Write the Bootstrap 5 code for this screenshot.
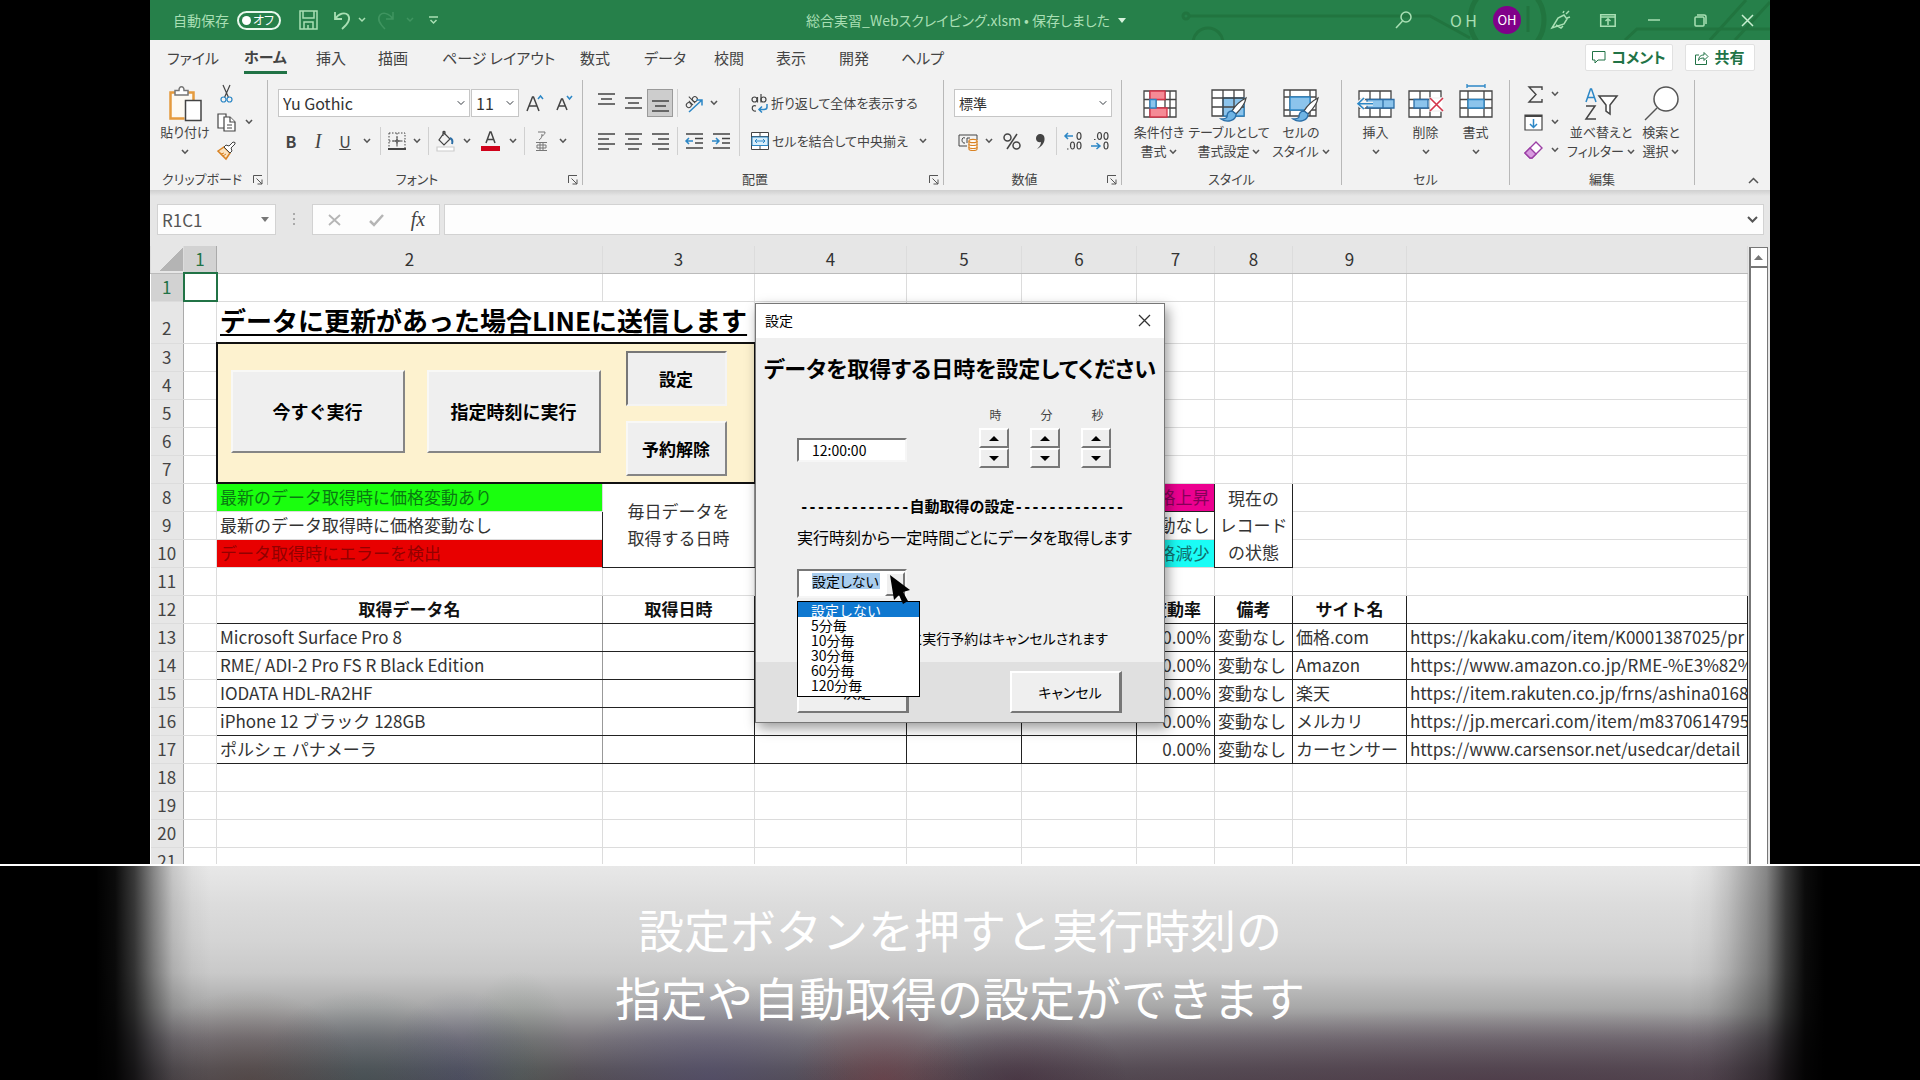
<!DOCTYPE html>
<html lang="ja">
<head>
<meta charset="utf-8">
<meta name="viewport" content="width=device-width, initial-scale=1">
<title>総合実習_Webスクレイピング.xlsm</title>
<link href="https://cdn.jsdelivr.net/npm/bootstrap@5.3.0/dist/css/bootstrap.min.css" rel="stylesheet">
<style>
:root{--jp:"Noto Sans CJK JP","Noto Sans",sans-serif;--green:#26804a;--pale:#a9dfb4;--ink:#444}
body{background:#000;font-family:var(--jp);color:var(--ink);font-size:14px}
button{font-family:inherit;color:inherit;font-feature-settings:inherit}
svg{display:block;flex:none;overflow:visible}
.app{width:84.375%;height:80vh;background:#e6e6e6}
.app>*{flex-shrink:0}
.ui{font-feature-settings:"palt"}
.flat{border:0;background:none;padding:0;display:flex;align-items:center;justify-content:center;height:28px}
/* title bar */
.titlebar{height:40px;background:var(--green);color:var(--pale);padding:0 11px 0 23px}
.titlebar .side{flex:1 1 0}
.circuit{position:absolute;top:0;right:0;z-index:0;overflow:hidden}
.toggle{width:44px;height:19px;border:2px solid #e8f8ec;border-radius:10px;color:#fff;font-size:12px;line-height:14px;padding:0 5px 0 3px;white-space:nowrap}
.toggle i{width:9px;height:9px;border-radius:50%;background:#fff;flex:none}
.avatar{width:28px;height:28px;border-radius:50%;background:#80008a;color:#fff;font-size:13px}
.shut{margin-left:12px}
.w14{width:14px}.w18{width:18px}.w24{width:24px}.w26{width:26px}.w28{width:28px}.w32{width:32px}.w46{width:46px}
.ital{font:italic 20px "Liberation Serif",serif}
/* tabs */
.tabs{height:40px;background:#f2f2f2;padding:4px 15px 0 0}
.tabs nav{display:grid;grid-template-columns:77px 72px 62px 64px 138px 64px 70px 62px 63px 62px 70px;margin:-1px 0 0 17px}
.tabs nav a{color:#444;text-decoration:none;font-size:15px;line-height:30px;white-space:nowrap;justify-self:start}
.tabs nav a.on{font-weight:700;border-bottom:3px solid #217346;line-height:28px;height:31px}
.pill{height:27px;background:#fff;border:1px solid #e1e1e1;border-radius:2px;color:#217346;font-weight:700;font-size:15px;gap:5px}
.pill.c{width:88px}.pill.s{width:70px}
/* ribbon */
.ribbon{height:110px;background:#f2f2f2}
.group{height:105px;border-right:1px solid #b8b8b8;flex:none}
.group .inner{height:88px}
.group .foot{height:18px;line-height:21px;position:relative;font-size:13px}
.group .foot svg{position:absolute;right:4px;top:7px}
.g1{width:118px}.g2{width:315px}.g3{width:361px}.g4{width:178px}.g5{width:220px}.g6{width:168px}.g7{width:185px}
.lines{padding:9px 0 0 10px;display:flex;flex-direction:column;gap:10px}
.rule{width:8px;height:28px;flex:none;background:linear-gradient(#d0d0d0,#d0d0d0) center/1px 100% no-repeat}
.rule.tall{height:68px;margin-top:8px}
.pressed{background:#cdcdcd;border:1px solid #9a9a9a}
.combo{height:28px;border:1px solid #c6c6c6;border-radius:0;background-color:#fff;background-size:8px;background-position:right 4px center;padding:0 4px;font-size:16px;line-height:26px;color:#333}
.combo.n{width:192px}.combo.z{width:48px;margin-left:1px}.combo.f{width:158px;font-size:14px}
.big{border:0;background:none;padding:5px 0 0;line-height:19px;font-size:13px;white-space:nowrap;display:flex;flex-direction:column;align-items:center}
.big .pic{height:37px;display:flex;align-items:center}
.big svg.cv{display:inline-block;vertical-align:1px}
.b50{width:50px}.b54{width:54px}.b66{width:66px}.b70{width:70px}.b74{width:74px}
.word{gap:3px;font-size:13px;white-space:nowrap}
.shade{height:6px;background:linear-gradient(#cfcfcf,#e6e6e6)}
/* formula bar */
.fbar{height:50px;padding:8px 6px 11px 7px}
.fbar>*{background:#fdfdfd;border:1px solid #d2d2d2;height:31px}
.namebox{width:119px;font-size:17px;color:#555}
.namebox input{width:98px;border:0;background:none;color:inherit;padding:0 4px;outline:0;line-height:28px}
.fbar .dots{background:none;border:0;width:36px}
.fxbox{width:128px}
/* sheet */
main{min-height:0;flex-basis:0}
.grid{table-layout:fixed;width:100%;border-collapse:collapse;background:#fff;font-size:17px;color:#333;line-height:24px}
.grid td,.grid th{height:28px;padding:0 3px;border:1px solid #dcdcdc;font-weight:400;white-space:nowrap;overflow:hidden}
.grid tr.heads th{height:27px;background:#e6e6e6;text-align:center;border-top:0;border-bottom-color:#bbb}
.grid tbody th.n,.grid tr.heads th.sel{background:#e6e6e6;text-align:center;border-right-color:#aaa;border-left:0;color:#444;padding:0}
.grid tbody th.n.sel,.grid tr.heads th.sel{background:#d2d2d2;color:#217346}
.grid tr.r2 td,.grid tr.r2 th{height:42px}
.grid tbody tr.r2 th.n{vertical-align:bottom;padding-bottom:3px}
.grid .headline{font-size:26px;line-height:36px;padding-bottom:4px;font-weight:700;color:#000;overflow:visible;text-decoration:underline;text-decoration-thickness:2px;text-underline-offset:3px}
.grid td.panel{background:#fdf2cf;border:2px solid #111;padding:0;vertical-align:top}
.grid td.k,.grid th.k{border-color:#222}
.grid th.k{font-weight:700;text-align:center;color:#111}
.grid td.soft,.grid th.soft{border-right-color:#999}
.grid td.airy{line-height:27px;padding:0 0 2px}
.corner{width:24px;height:23px;margin-left:auto;background:linear-gradient(135deg,transparent 50%,#b4b4b4 50%)}
.grid td.active{outline:2px solid #217346;outline-offset:-1px;background:#fff}
.lime{background:#1aff0e!important;color:#0a7a12}
.rouge{background:#e80000!important;color:#930000}
.pink{background:#ec0090!important;color:#850058}
.aqua{background:#1afdf6!important;color:#12706e}
.runs{padding:2px 0 0 13px;gap:22px}
.opts{padding:7px 0 0 25px;gap:15px}
.face{background:#efefef;color:#000;font-weight:700;border:2px solid;border-color:#f8f8f6 #858585 #858585 #f8f8f6;padding:0}
.face.run{width:174px;height:83px;font-size:18px}
.face.opt{width:101px;height:55px;font-size:17px}
.face.down{border-color:#777 #f4f4f4 #f4f4f4 #777}
.scroll{width:22px;padding:1px 2px 0 1px;background:#e6e6e6}
.scroll>div{background:#fff;border:solid #777;border-width:1px 1px 0 2px}
.scroll button{width:100%;height:20px;border-bottom:2px solid #777}
/* settings window */
.dlg{position:absolute;left:605px;top:303px;width:410px;background:#efefef;border:1px solid #777;box-shadow:3px 5px 12px rgba(0,0,0,.4);color:#000;font-feature-settings:"palt"}
.dlg .cap{height:34px;background:#fff;padding:0 13px 2px 9px}
.dlg h1{font-size:22px;line-height:32px;font-weight:700;text-align:center;margin:13px 0 0;white-space:nowrap}
.timing{padding:23px 53px 0 41px;align-items:flex-end}
.sunk{background:#fff;border:2px solid;border-color:#777 #f6f6f6 #f6f6f6 #777}
.timebox{width:110px;height:24px;font-size:14px;padding:0 13px;margin-bottom:6px;outline:0}
.spin{width:30px;margin-left:21px}
.spin span{font-size:12px;line-height:18px;color:#444;margin-bottom:4px;display:block;text-align:center;padding-left:3px}
.spin button{width:30px;height:20px}
.mini{background:#efefef;border:2px solid;border-color:#fff #777 #777 #fff}
.split{font-size:15px;line-height:24px;font-weight:700;margin-top:26px;padding-left:4px;font-feature-settings:normal}
.split span{font-family:"DejaVu Sans Mono",monospace;font-size:14px}
.note{font-size:16px;line-height:24px;padding-left:41px;margin-top:6px;white-space:nowrap}
.cbx{position:relative;width:110px;height:29px;margin:20px 0 0 41px;padding:2px 0 0 13px}
.cbx input{border:0;width:68px;height:16px;padding:0;background:#a9cdee;font-size:14px;line-height:16px;outline:0;font-feature-settings:inherit;font-family:inherit}
.cbx button{position:absolute;right:0;top:1px;width:20px;height:24px}
.drop{position:absolute;left:41px;top:297px;width:123px;height:96px;border:1px solid #000;border-radius:0;background:#fff;padding:0;overflow:hidden;font-size:14px;font-family:inherit;outline:0;z-index:2;scrollbar-width:none}
.drop option{display:flex;align-items:center;height:15px;min-height:0;line-height:15px;padding:0 0 0 13px;color:#000;font-size:14px;font-family:var(--jp)}
.drop option:checked{background:#0f78d0 linear-gradient(#0f78d0,#0f78d0);color:#fff}
.later{margin-top:28px;padding-left:154px;font-size:14px}
.actions{background:#e0e0e0;height:60px;margin-top:12px;padding:9px 42px 0 41px}
.act{width:112px;height:42px;font-size:14px;border:2px solid;border-color:#fff #777 #777 #fff;border-right-width:3px;padding:0 0 0 9px;color:#000;background:#efefef}
.pointer{position:absolute;left:134px;top:271px;z-index:3}
/* caption strip */
.strip{border-top:2px solid #fff;overflow:hidden;color:#fff;font-size:46px;line-height:68px;text-align:center;padding-top:28px;
background:
linear-gradient(90deg,#000 5%,rgba(0,0,0,.95) 6%,rgba(0,0,0,.75) 7%,rgba(0,0,0,.42) 8%,rgba(0,0,0,.14) 9%,rgba(0,0,0,.04) 10%,transparent 11%,transparent 88%,rgba(0,0,0,.04) 89%,rgba(0,0,0,.14) 90%,rgba(0,0,0,.42) 92%,rgba(0,0,0,.75) 93%,rgba(0,0,0,.95) 94%,#000 95%),
radial-gradient(110px 90px at 13% 100%,rgba(80,62,50,.35),transparent),
radial-gradient(110px 90px at 19% 100%,rgba(50,85,85,.35),transparent),
radial-gradient(80px 90px at 24% 100%,rgba(60,75,120,.3),transparent),
radial-gradient(60px 110px at 27% 100%,rgba(80,115,85,.25),transparent),
radial-gradient(140px 100px at 37% 100%,rgba(80,76,125,.4),transparent),
radial-gradient(90px 80px at 46% 100%,rgba(130,55,65,.4),transparent),
radial-gradient(110px 70px at 53% 100%,rgba(60,30,50,.4),transparent),
radial-gradient(700px 70px at 78% 100%,rgba(75,48,66,.5),transparent),
linear-gradient(#e8e8e8 0,#dcdcdc 18%,#d4d4d4 35%,#c9c9c9 50%,#a8a8a8 66%,#78747a 81%,#59545a 95%,#544e54 100%)}
</style>
<script src="https://cdn.jsdelivr.net/npm/bootstrap@5.3.0/dist/js/bootstrap.bundle.min.js"></script>
</head>
<body class="vh-100 d-flex flex-column overflow-hidden">
<svg width="0" height="0" class="position-absolute"><defs>
<symbol id="cv" viewBox="0 0 8 6"><path d="M1 1l3 3.200L7 1" fill="none" stroke="#555" stroke-width="1.600"/></symbol>
<symbol id="ln" viewBox="0 0 10 10"><path d="M.5 8V.5H9M3.500 3.500L9 9M9 4.500V9H4.500" fill="none" stroke="#555"/></symbol>
</defs></svg>

<div class="app position-relative mx-auto d-flex flex-column overflow-hidden">
 <header class="titlebar ui d-flex align-items-center position-relative">
  <svg class="circuit" width="590" height="40" fill="none" stroke="#21743f" stroke-width="3"><path d="M10 16h240l40 22M445 40l12-11h133"/><circle cx="6" cy="16" r="3"/><circle cx="28" cy="43" r="15"/><circle cx="327" cy="20" r="37" stroke-width="5"/><path d="M530 40L566 0M555 40L590 2M348 6v26"/></svg>
  <div class="side d-flex align-items-center position-relative">
   <span class="me-2">自動保存</span>
   <button class="toggle bg-transparent d-flex align-items-center justify-content-between" aria-label="自動保存 オフ"><i></i>オフ</button>
   <button class="flat w46 ms-1" aria-label="上書き保存"><svg width="19" height="20" fill="none" stroke="var(--pale)" stroke-width="1.500"><path d="M1 1h17v18H1zM4 1v7h11V1M5 19v-7h9v7M9 19v-4"/></svg></button>
   <button class="flat w24" aria-label="元に戻す"><svg width="20" height="20" fill="none" stroke="var(--pale)" stroke-width="1.800"><path d="M2 2v7h7M2 9c4-6 10-7 13-4 3 4 1 8-6 14"/></svg></button>
   <button class="flat w14" aria-label="元に戻す一覧"><svg width="8" height="6" fill="none" stroke="var(--pale)" stroke-width="1.500"><path d="M1 1l3 3 3-3"/></svg></button>
   <button class="flat w32" aria-label="やり直し"><svg width="18" height="20" fill="none" stroke="#3f9460" stroke-width="1.500"><path d="M17 2v7h-7M17 9C13 3 7 2 4 5c-3 4-1 8 5 14"/></svg></button>
   <button class="flat w18" aria-label="やり直し一覧"><svg width="8" height="6" fill="none" stroke="#3f9460" stroke-width="1.500"><path d="M1 1l3 3 3-3"/></svg></button>
   <button class="flat w28" aria-label="カスタマイズ"><svg width="9" height="9" fill="none" stroke="var(--pale)" stroke-width="1.500"><path d="M0 1h9M1.500 4l3 3 3-3"/></svg></button>
  </div>
  <div class="position-relative d-flex align-items-center gap-2"><span>総合実習_Webスクレイピング.xlsm • 保存しました</span><svg width="8" height="5"><path d="M0 0h8L4 5z" fill="#d6f2dc"/></svg></div>
  <div class="side d-flex align-items-center justify-content-end position-relative">
   <button class="flat w28" aria-label="検索"><svg width="17" height="18" fill="none" stroke="var(--pale)" stroke-width="1.500"><circle cx="11" cy="6" r="5"/><path d="M7.500 10L1 17"/></svg></button>
   <span class="fs-6 ms-4 ps-2 me-3">O H</span>
   <span class="avatar d-flex align-items-center justify-content-center">OH</span>
   <button class="flat w32 ms-4 me-2" aria-label="描画"><svg width="20" height="20" fill="none" stroke="var(--pale)" stroke-width="1.500"><path d="M1 18L7 8l6-3 3 4-3 5zM5 15l5 3 2-2M12 3l1-2M15 4l3-3M16 8l3-1"/></svg></button>
   <button class="flat w46" aria-label="リボンの表示"><svg width="16" height="13" fill="none" stroke="var(--pale)" stroke-width="1.500"><path d="M.7.7h14.500v11.500H.7zM.7 3h14.500M8 11V5M5.500 7L8 4.800 10.500 7"/></svg></button>
   <button class="flat w46" aria-label="最小化"><svg width="12" height="2"><path d="M0 1h12" stroke="var(--pale)" stroke-width="1.500"/></svg></button>
   <button class="flat w46" aria-label="元に戻す（縮小）"><svg width="13" height="13" fill="none" stroke="var(--pale)" stroke-width="1.500"><rect x="1" y="3" width="9" height="9" rx="1"/><path d="M3 1h7q2 0 2 2v7"/></svg></button>
   <button class="flat w24 shut" aria-label="閉じる"><svg width="13" height="13"><path d="M1 1l11 11M12 1L1 12" stroke="#c8efd0" stroke-width="1.500"/></svg></button>
  </div>
 </header>

 <div class="tabs ui d-flex align-items-start justify-content-between">
  <nav><a href="#">ファイル</a><a href="#" class="on">ホーム</a><a href="#">挿入</a><a href="#">描画</a><a href="#">ページ レイアウト</a><a href="#">数式</a><a href="#">データ</a><a href="#">校閲</a><a href="#">表示</a><a href="#">開発</a><a href="#">ヘルプ</a></nav>
  <div class="d-flex gap-2">
   <button class="pill c me-1 p-0 d-flex align-items-center justify-content-center"><svg width="14" height="13" fill="none" stroke="#217346"><path d="M.5.500h12.500v8.500H6l-3 3V9H.5z"/></svg>コメント</button>
   <button class="pill s p-0 d-flex align-items-center justify-content-center"><svg width="14" height="14" fill="none" stroke="#217346"><path d="M4 4H.5v9.500h11V9M3.500 9.500c.5-4 2-5.500 5.500-5.500V1.500L13 5.500 9 9.500V7c-3 0-4.500.5-5.500 2.500z"/></svg>共有</button>
  </div>
 </div>

 <div class="ribbon ui d-flex">
  <section class="group g1">
   <div class="inner d-flex">
    <button class="big b54 ms-2"><span class="pic"><svg width="33" height="36" fill="none"><path d="M24.500 15V6.500h-23v26h14" stroke="#e59b3e" stroke-width="2.500" fill="#fdfaf3"/><path d="M6 9V4.500h4c0-5 5-5 5 0h4V9z" fill="#fff" stroke="#777" stroke-width="1.500"/><path d="M16.500 14.500h15.500v20H16.500z" fill="#fff" stroke="#444" stroke-width="1.500"/></svg></span><span>貼り付け</span><svg class="cv mt-2" width="8" height="6"><use href="#cv"/></svg></button>
    <div class="d-flex flex-column">
     <button class="flat w28" aria-label="切り取り"><svg width="13" height="18" fill="none" stroke="#444" stroke-width="1.200"><path d="M3 0l5.500 12.500M10 0L4.500 12.500"/><circle cx="3.500" cy="14.500" r="2.500" stroke="#2c87c6"/><circle cx="9.500" cy="14.500" r="2.500" stroke="#2c87c6"/></svg></button>
     <div class="d-flex"><button class="flat w28" aria-label="コピー"><svg width="19" height="19" fill="#fff" stroke="#444" stroke-width="1.200"><path d="M8 15H1V1h8v3"/><path d="M7 4h6l5 5v9H7z"/><path d="M13 4v5h5M10 12h5M10 15h5"/></svg></button><button class="flat w18" aria-label="コピー一覧"><svg width="8" height="6"><use href="#cv"/></svg></button></div>
     <button class="flat w28" aria-label="書式のコピー"><svg width="19" height="18"><path d="M1 10l6-4 6 6-4 6z" fill="#fbe3c0" stroke="#d98324" stroke-width="1.500"/><path d="M4 13l3-1M6 15l3-2" stroke="#d98324"/><path d="M7 6l2-2 3 1 4-4q3 0 2 2l-4 4 1 3-2 2z" fill="#fff" stroke="#444"/></svg></button>
    </div>
   </div>
   <div class="foot ps-2 ms-1">クリップボード<svg width="10" height="10"><use href="#ln"/></svg></div>
  </section>

  <section class="group g2">
   <div class="inner lines">
    <div class="d-flex"><select class="form-select combo n" aria-label="フォント"><option>Yu Gothic</option></select><select class="form-select combo z" aria-label="サイズ"><option>11</option></select>
     <button class="flat w32" aria-label="拡大"><svg width="18" height="18" fill="none" stroke="#444" stroke-width="1.500"><path d="M1 17L6.500 3h1L13 17M3 12h8"/><path d="M12 5l2.500-3L17 5" stroke="#2c87c6"/></svg></button>
     <button class="flat w26" aria-label="縮小"><svg width="17" height="16" fill="none" stroke="#444" stroke-width="1.500"><path d="M1 15L5.500 4h1L11 15M3 11h6"/><path d="M11 1l2.500 3L16 1" stroke="#2c87c6"/></svg></button></div>
    <div class="d-flex">
     <button class="flat w26 fs-6 fw-bold">B</button><button class="flat w28 ital">I</button><button class="flat w26 fs-6 text-decoration-underline">U</button><button class="flat w18" aria-label="下線"><svg width="8" height="6"><use href="#cv"/></svg></button><span class="rule"></span>
     <button class="flat w26" aria-label="罫線"><svg width="18" height="18" fill="none" stroke="#444"><path d="M1 1h16v16M1 1v16M9 1v16M1 9h16" stroke-dasharray="1.500 1.500"/><path d="M0 17h18" stroke-width="2"/><path d="M5 9h8M9 5v8"/></svg></button><button class="flat w14" aria-label="罫線一覧"><svg width="8" height="6"><use href="#cv"/></svg></button><span class="rule"></span>
     <button class="flat w28" aria-label="塗りつぶし"><svg width="18" height="20" fill="none" stroke="#444" stroke-width="1.200"><path d="M7 2l6 6-6 6-5-5zM6 5V1c0-1 2-1 2 0v3"/><path d="M13 7c2 1 3 3 2 6" stroke="#2c6ea6" stroke-width="2"/><path d="M0 16h17v4H0z" fill="#fff" stroke="#ccc"/></svg></button><button class="flat w14" aria-label="塗りつぶし一覧"><svg width="8" height="6"><use href="#cv"/></svg></button>
     <button class="flat w32" aria-label="文字色"><svg width="19" height="20" fill="none"><path d="M5 12L9 1h1l4 11M6.500 8.500h6" stroke="#444" stroke-width="1.500"/><path d="M0 15h19v5H0z" fill="#d0021b"/></svg></button><button class="flat w14" aria-label="文字色一覧"><svg width="8" height="6"><use href="#cv"/></svg></button><span class="rule"></span>
     <button class="flat w26" aria-label="ふりがな"><svg width="11" height="20" fill="none" stroke="#777"><path d="M2 1h7c0 2-1 3-3 4M6 3c0 3-1 5-3 6M0 11.500h11M4 12v7M7 12v7M1 14h9v3H1zM0 19.500h11"/></svg></button><button class="flat w18" aria-label="ふりがな一覧"><svg width="8" height="6"><use href="#cv"/></svg></button>
    </div>
   </div>
   <div class="foot text-center pe-3">フォント<svg width="10" height="10"><use href="#ln"/></svg></div>
  </section>

  <section class="group g3">
   <div class="inner d-flex">
    <div class="lines">
     <div class="d-flex">
      <button class="flat w26 pb-2" aria-label="上揃え"><svg width="17" height="13" stroke="#444" stroke-width="1.500"><path d="M0 1h17M3 6h11M0 11h17"/></svg></button>
      <button class="flat w28" aria-label="中央揃え（上下）"><svg width="17" height="13" stroke="#444" stroke-width="1.500"><path d="M0 1h17M3 6h11M0 11h17"/></svg></button>
      <button class="flat w26 pressed" aria-label="下揃え"><svg width="17" height="17" stroke="#444" stroke-width="1.500"><path d="M0 6h17M3 11h11M0 16h17"/></svg></button><span class="rule"></span>
      <button class="flat w26" aria-label="方向"><svg width="20" height="19" fill="none" stroke="#444"><g transform="rotate(-45 8 8)"><circle cx="3.500" cy="8" r="2.500"/><path d="M6.500 5v6M9.500 2v9"/><circle cx="12" cy="8" r="2.500"/></g><path d="M5 18L18 6M12.500 6H18v5.500" stroke="#2c87c6" stroke-width="1.500"/></svg></button><button class="flat w14" aria-label="方向一覧"><svg width="8" height="6"><use href="#cv"/></svg></button>
     </div>
     <div class="d-flex">
      <button class="flat w26" aria-label="左揃え"><svg width="17" height="17" stroke="#444" stroke-width="1.500"><path d="M0 1h17M0 6h11M0 11h17M0 16h11"/></svg></button>
      <button class="flat w28" aria-label="中央揃え"><svg width="17" height="17" stroke="#444" stroke-width="1.500"><path d="M0 1h17M3 6h11M0 11h17M3 16h11"/></svg></button>
      <button class="flat w26" aria-label="右揃え"><svg width="17" height="17" stroke="#444" stroke-width="1.500"><path d="M0 1h17M6 6h11M0 11h17M6 16h11"/></svg></button><span class="rule"></span>
      <button class="flat w26" aria-label="インデントを減らす"><svg width="18" height="16" fill="none" stroke="#444" stroke-width="1.500"><path d="M1 1h17M10 5.500h8M10 10h8M1 15h17"/><path d="M8 8H1M4 5L1 8l3 3" stroke="#2c87c6"/></svg></button>
      <button class="flat w28" aria-label="インデントを増やす"><svg width="18" height="16" fill="none" stroke="#444" stroke-width="1.500"><path d="M1 1h17M10 5.500h8M10 10h8M1 15h17"/><path d="M0 8h7M4 5l3 3-3 3" stroke="#2c87c6"/></svg></button>
     </div>
    </div>
    <span class="rule tall"></span>
    <div class="lines ps-2">
     <button class="flat word justify-content-start"><svg width="17" height="20" fill="none" stroke="#444" stroke-width="1.200"><circle cx="3.500" cy="6.500" r="2.500"/><path d="M6.500 4v5.500M10 1v8.500"/><circle cx="12.500" cy="6.500" r="2.500"/><path d="M5 13c-5-2-5 6 0 5"/><path d="M16 11v3c0 2-1 2.500-3 2.500H8M11 13.500l-3 3 3 3" stroke="#2c87c6" stroke-width="1.500"/></svg>折り返して全体を表示する</button>
     <button class="flat word justify-content-start"><svg width="18" height="18" fill="#fff" stroke="#444"><path d="M.5.500h17v17H.5zM.5 4.500h17M.5 13.500h17M9 0v4.500M9 13.500V18"/><path d="M1 5h16v8.500H1z" fill="#d9eefa" stroke="#2c87c6"/><path d="M4 9h10M6 7L4 9l2 2M12 7l2 2-2 2" fill="none" stroke="#2c87c6"/></svg>セルを結合して中央揃え<svg class="ms-2" width="8" height="6"><use href="#cv"/></svg></button>
    </div>
   </div>
   <div class="foot text-center pe-3">配置<svg width="10" height="10"><use href="#ln"/></svg></div>
  </section>

  <section class="group g4">
   <div class="inner lines">
    <select class="form-select combo f" aria-label="表示形式"><option>標準</option></select>
    <div class="d-flex">
     <button class="flat w28" aria-label="通貨"><svg width="20" height="19" fill="none" stroke="#444"><path d="M1 14V3h18v5M1 14h8"/><path d="M7 6c-4-2-4 6 0 5M12 6H9v5"/><g stroke="#d98324" fill="#fff" stroke-width="1.200"><path d="M11 9v8c0 2 8 2 8 0V9"/><ellipse cx="15" cy="9" rx="4" ry="1.700"/><path d="M11 12c0 2 8 2 8 0M11 15c0 2 8 2 8 0"/></g></svg></button><button class="flat w14" aria-label="通貨一覧"><svg width="8" height="6"><use href="#cv"/></svg></button>
     <button class="flat w32" aria-label="パーセント"><svg width="18" height="17" fill="none" stroke="#444" stroke-width="1.500"><circle cx="4.500" cy="4.500" r="3.500"/><circle cx="13.500" cy="12.500" r="3.500"/><path d="M14 1L4 16"/></svg></button>
     <button class="flat w24" aria-label="桁区切り"><svg width="9" height="15"><path d="M4 0c3 0 5 2 4.500 6C8 10 5 13 1 15c2-2 4-4 4-7C1 9 0 6 0 4c0-2 2-4 4-4z" fill="#444"/></svg></button><span class="rule"></span>
     <button class="flat w26" aria-label="小数点以下を増やす"><svg width="18" height="18" fill="none" stroke="#444" stroke-width="1.200"><ellipse cx="15" cy="4" rx="2" ry="3.500"/><ellipse cx="8.500" cy="13.500" rx="2" ry="3.500"/><ellipse cx="15" cy="13.500" rx="2" ry="3.500"/><path d="M3 17h1.500"/><path d="M9 4H1M4 1L1 4l3 3" stroke="#2c87c6" stroke-width="1.500"/></svg></button>
     <button class="flat w28" aria-label="小数点以下を減らす"><svg width="18" height="18" fill="none" stroke="#444" stroke-width="1.200"><ellipse cx="8.500" cy="4" rx="2" ry="3.500"/><ellipse cx="15" cy="4" rx="2" ry="3.500"/><ellipse cx="15" cy="13.500" rx="2" ry="3.500"/><path d="M3 7.500h1.500"/><path d="M0 14h8M5.500 11L9 14l-3.500 3" stroke="#2c87c6" stroke-width="1.500"/></svg></button>
    </div>
   </div>
   <div class="foot text-center pe-3">数値<svg width="10" height="10"><use href="#ln"/></svg></div>
  </section>

  <section class="group g5">
   <div class="inner d-flex ps-1">
    <button class="big b66"><span class="pic"><svg width="33" height="28" fill="#fff" stroke="#444" stroke-width="1.300"><path d="M1 1h32v26H1zM7 1v26M13 1v26M22 1v26M27 1v26M1 9.500h32M1 18h32"/><path d="M7 1h15v8.500H7zM7 18h17v9H7z" fill="#f58a95" stroke="#d4354a"/><path d="M7 9.500h6V18H7z" fill="#8cc4ec" stroke="#2c87c6"/></svg></span><span>条件付き</span><span>書式 <svg class="cv" width="8" height="6"><use href="#cv"/></svg></span></button>
    <button class="big b74"><span class="pic"><svg width="36" height="34" fill="#fff" stroke="#444" stroke-width="1.300"><path d="M1 3h32v26H1z"/><path d="M12 11h21v18H12z" fill="#8cc4ec" stroke="#2c87c6"/><path d="M12 3v26M23 3v26M1 11h32M1 20h32" fill="none"/><path d="M35 11c-6 3-11 8-14 13l4 3c5-5 9-10 10-16z"/><path d="M21 24c-4 0-5 3-5 6-1 2-3 2-6 2 6 4 15 2 15-5z" fill="#6fb4e4" stroke="#2c6ea6"/></svg></span><span>テーブルとして</span><span>書式設定 <svg class="cv" width="8" height="6"><use href="#cv"/></svg></span></button>
    <button class="big b70"><span class="pic"><svg width="36" height="34" fill="#fff" stroke="#444" stroke-width="1.300"><path d="M1 3h32v26H1zM7 3v26M27 3v26M1 10h32M1 23h32"/><path d="M7 10h20v13H7z" fill="#8cc4ec" stroke="#2c87c6"/><path d="M35 11c-6 3-11 8-14 13l4 3c5-5 9-10 10-16z"/><path d="M21 24c-4 0-5 3-5 6-1 2-3 2-6 2 6 4 15 2 15-5z" fill="#6fb4e4" stroke="#2c6ea6"/></svg></span><span>セルの</span><span>スタイル <svg class="cv" width="8" height="6"><use href="#cv"/></svg></span></button>
   </div>
   <div class="foot text-center">スタイル</div>
  </section>

  <section class="group g6">
   <div class="inner d-flex justify-content-center">
    <button class="big b50"><span class="pic"><svg width="37" height="28" fill="#fff" stroke="#444" stroke-width="1.300"><path d="M2 1h32v26H2zM13 1v26M23 1v26M2 9.500h32M2 18h32"/><path d="M10 9.500h27V18H10z" fill="#8cc4ec" stroke="#2c6ea6"/><path d="M26 9.500V18" stroke="#2c6ea6"/><path d="M16 13.700H1M7 8l-6 5.700L7 19" fill="none" stroke="#f2f2f2" stroke-width="4"/><path d="M16 13.700H1M7 8l-6 5.700L7 19" fill="none" stroke="#2c87c6" stroke-width="1.600"/></svg></span><span>挿入</span><svg class="cv mt-2" width="8" height="6"><use href="#cv"/></svg></button>
    <button class="big b50"><span class="pic"><svg width="36" height="28" fill="#fff" stroke="#444" stroke-width="1.300"><path d="M1 1h32v26H1zM12 1v26M22 1v26M1 9.500h32M1 18h32"/><path d="M6 9.500h14V18H6z" fill="#8cc4ec" stroke="#2c6ea6"/><path d="M22 8h13v13H22z" stroke="#f2f2f2"/><path d="M22 8l13 13M35 8L22 21" stroke="#d4354a" stroke-width="1.600"/></svg></span><span>削除</span><svg class="cv mt-2" width="8" height="6"><use href="#cv"/></svg></button>
    <button class="big b50"><span class="pic"><svg width="34" height="28" fill="#fff" stroke="#444" stroke-width="1.300"><path d="M1 1h32v26H1zM9 1v26M25 1v26M1 9.500h32M1 18h32"/><path d="M9 9.500h16V18H9z" fill="#8cc4ec" stroke="#2c87c6"/><path d="M8-4h18M8-6v4M26-6v4" stroke="#2c87c6"/></svg></span><span>書式</span><svg class="cv mt-2" width="8" height="6"><use href="#cv"/></svg></button>
   </div>
   <div class="foot text-center">セル</div>
  </section>

  <section class="group g7">
   <div class="inner d-flex">
    <div class="d-flex flex-column ms-2 me-1">
     <button class="flat w46 gap-2 ps-1" aria-label="合計"><svg width="15" height="17" fill="none" stroke="#444" stroke-width="1.400"><path d="M14 4V1H1l7 7.500L1 16h13v-3"/></svg><svg width="8" height="6"><use href="#cv"/></svg></button>
     <button class="flat w46 gap-2" aria-label="フィル"><svg width="19" height="17" fill="#fff" stroke="#444" stroke-width="1.200"><path d="M1 1h17v15H1z"/><path d="M1 2h17" stroke-width="2"/><path d="M9.500 5v8M6 10l3.500 3.500L13 10" fill="none" stroke="#2c87c6" stroke-width="1.500"/></svg><svg width="8" height="6"><use href="#cv"/></svg></button>
     <button class="flat w46 gap-2" aria-label="クリア"><svg width="19" height="18" fill="#fff" stroke="#9b3fa5" stroke-width="1.400"><path d="M12 1l6 6L8 17H6l-5-5z"/><path d="M6 7l6 6-4 4H6l-5-5z" fill="#d89be0"/></svg><svg width="8" height="6"><use href="#cv"/></svg></button>
    </div>
    <button class="big b66"><span class="pic"><svg width="34" height="32" fill="none" stroke="#444" stroke-width="1.500"><path d="M2 14L6.500 1h1L12 14M4 9.500h6" stroke="#2c87c6"/><path d="M2 18h9L2 31h10"/><path d="M15 8h18l-7 9v9l-4-3v-6z" fill="#fff"/></svg></span><span>並べ替えと</span><span>フィルター <svg class="cv" width="8" height="6"><use href="#cv"/></svg></span></button>
    <button class="big b54"><span class="pic"><svg width="35" height="34" fill="#fff" stroke="#555" stroke-width="1.500"><circle cx="22" cy="12" r="12"/><path d="M13 21L1 33"/></svg></span><span>検索と</span><span>選択 <svg class="cv" width="8" height="6"><use href="#cv"/></svg></span></button>
   </div>
   <div class="foot text-center">編集</div>
  </section>
  <div class="flex-grow-1 d-flex align-items-end justify-content-end pe-2"><button class="flat w18" aria-label="リボンを折りたたむ"><svg width="11" height="7" class="mt-2"><path d="M1 6l4.500-4.500L10 6" fill="none" stroke="#555" stroke-width="1.500"/></svg></button></div>
 </div>
 <div class="shade"></div>

 <div class="fbar d-flex">
  <div class="namebox d-flex align-items-center"><input value="R1C1" aria-label="名前ボックス"><button class="flat w18" aria-label="名前一覧"><svg width="8" height="5"><path d="M0 0h8L4 5z" fill="#777"/></svg></button></div>
  <div class="dots d-flex align-items-center justify-content-center"><svg width="3" height="13" fill="#aaa"><path d="M0 0h2v2H0zM0 5h2v2H0zM0 10h2v2H0z"/></svg></div>
  <div class="fxbox d-flex align-items-center justify-content-around">
   <button class="flat w26" aria-label="キャンセル"><svg width="13" height="12"><path d="M1 1l11 10M12 1L1 11" stroke="#b5b5b5" stroke-width="1.800"/></svg></button>
   <button class="flat w26" aria-label="入力"><svg width="15" height="12"><path d="M1 7l4 4L14 1" fill="none" stroke="#b5b5b5" stroke-width="2.500"/></svg></button>
   <button class="flat w26 ital">fx</button></div>
  <div class="flex-grow-1 ms-1 d-flex align-items-center pe-1"><input class="flex-grow-1 border-0 bg-transparent" aria-label="数式バー"><button class="flat w14" aria-label="数式バーの展開"><svg width="11" height="7"><path d="M1 1l4.500 4.500L10 1" fill="none" stroke="#555" stroke-width="2"/></svg></button></div>
 </div>

 <main class="flex-grow-1 d-flex overflow-hidden">
  <div class="flex-grow-1 overflow-hidden">
  <table class="grid">
   <colgroup><col width="33"><col width="33"><col width="386"><col width="152"><col width="152"><col width="115"><col width="115"><col width="78"><col width="78"><col width="114"><col></colgroup>
   <thead><tr class="heads"><th class="p-0"><div class="corner"></div></th><th class="sel">1</th><th>2</th><th>3</th><th>4</th><th>5</th><th>6</th><th>7</th><th>8</th><th>9</th><th></th></tr></thead>
   <tbody>
   <tr><th class="n sel">1</th><td class="active"></td><td></td><td></td><td></td><td></td><td></td><td></td><td></td><td></td><td></td></tr>
   <tr class="r2"><th class="n">2</th><td></td><td colspan="2" class="headline">データに更新があった場合LINEに送信します</td><td></td><td></td><td></td><td></td><td></td><td></td><td></td></tr>
   <tr><th class="n">3</th><td></td><td colspan="2" rowspan="5" class="panel"><div class="d-flex">
     <div class="runs d-flex align-items-center"><button class="face run">今すぐ実行</button><button class="face run">指定時刻に実行</button></div>
     <div class="opts d-flex flex-column"><button class="face opt down">設定</button><button class="face opt">予約解除</button></div></div></td><td></td><td></td><td></td><td></td><td></td><td></td><td></td></tr>
   <tr><th class="n">4</th><td></td><td></td><td></td><td></td><td></td><td></td><td></td><td></td></tr>
   <tr><th class="n">5</th><td></td><td></td><td></td><td></td><td></td><td></td><td></td><td></td></tr>
   <tr><th class="n">6</th><td></td><td></td><td></td><td></td><td></td><td></td><td></td><td></td></tr>
   <tr><th class="n">7</th><td></td><td></td><td></td><td></td><td></td><td></td><td></td><td></td></tr>
   <tr><th class="n">8</th><td></td><td class="lime">最新のデータ取得時に価格変動あり</td><td rowspan="3" class="k soft airy text-center">毎日データを<br>取得する日時</td><td></td><td></td><td></td><td class="k pink text-center">価格上昇</td><td rowspan="3" class="k airy text-center">現在の<br>レコード<br>の状態</td><td></td><td></td></tr>
   <tr><th class="n">9</th><td></td><td>最新のデータ取得時に価格変動なし</td><td></td><td></td><td></td><td class="text-center">変動なし</td><td></td><td></td></tr>
   <tr><th class="n">10</th><td></td><td class="rouge">データ取得時にエラーを検出</td><td></td><td></td><td></td><td class="aqua text-center">価格減少</td><td></td><td></td></tr>
   <tr><th class="n">11</th><td></td><td></td><td></td><td></td><td></td><td></td><td></td><td></td><td></td><td></td></tr>
   <tr><th class="n">12</th><td></td><th class="k soft">取得データ名</th><th class="k">取得日時</th><th class="k"></th><th class="k"></th><th class="k"></th><th class="k">変動率</th><th class="k">備考</th><th class="k">サイト名</th><th class="k"></th></tr>
   <tr><th class="n">13</th><td></td><td class="k soft">Microsoft Surface Pro 8</td><td class="k"></td><td class="k"></td><td class="k"></td><td class="k"></td><td class="k text-end">0.00%</td><td class="k">変動なし</td><td class="k">価格.com</td><td class="k">https://kakaku.com/item/K0001387025/pr</td></tr>
   <tr><th class="n">14</th><td></td><td class="k soft">RME/ ADI-2 Pro FS R Black Edition</td><td class="k"></td><td class="k"></td><td class="k"></td><td class="k"></td><td class="k text-end">0.00%</td><td class="k">変動なし</td><td class="k">Amazon</td><td class="k">https://www.amazon.co.jp/RME-%E3%82%</td></tr>
   <tr><th class="n">15</th><td></td><td class="k soft">IODATA HDL-RA2HF</td><td class="k"></td><td class="k"></td><td class="k"></td><td class="k"></td><td class="k text-end">0.00%</td><td class="k">変動なし</td><td class="k">楽天</td><td class="k">https://item.rakuten.co.jp/frns/ashina0168</td></tr>
   <tr><th class="n">16</th><td></td><td class="k soft">iPhone 12 ブラック 128GB</td><td class="k"></td><td class="k"></td><td class="k"></td><td class="k"></td><td class="k text-end">0.00%</td><td class="k">変動なし</td><td class="k">メルカリ</td><td class="k">https://jp.mercari.com/item/m8370614795</td></tr>
   <tr><th class="n">17</th><td></td><td class="k soft">ポルシェ パナメーラ</td><td class="k"></td><td class="k"></td><td class="k"></td><td class="k"></td><td class="k text-end">0.00%</td><td class="k">変動なし</td><td class="k">カーセンサー</td><td class="k">https://www.carsensor.net/usedcar/detail</td></tr>
   <tr><th class="n">18</th><td></td><td></td><td></td><td></td><td></td><td></td><td></td><td></td><td></td><td></td></tr>
   <tr><th class="n">19</th><td></td><td></td><td></td><td></td><td></td><td></td><td></td><td></td><td></td><td></td></tr>
   <tr><th class="n">20</th><td></td><td></td><td></td><td></td><td></td><td></td><td></td><td></td><td></td><td></td></tr>
   <tr><th class="n">21</th><td></td><td></td><td></td><td></td><td></td><td></td><td></td><td></td><td></td><td></td></tr>
   </tbody>
  </table>
  </div>
  <div class="scroll flex-shrink-0"><div class="h-100"><button class="flat" aria-label="上へスクロール"><svg width="9" height="5"><path d="M0 5h9L4.500 0z" fill="#777"/></svg></button></div></div>
 </main>

 <div class="dlg" role="dialog" aria-label="設定">
  <div class="cap d-flex align-items-center justify-content-between"><span>設定</span><button class="flat" aria-label="閉じる"><svg width="13" height="13"><path d="M1 1l11 11M12 1L1 12" stroke="#333" stroke-width="1.300"/></svg></button></div>
  <h1>データを取得する日時を設定してください</h1>
  <div class="timing d-flex">
   <input class="sunk timebox me-auto" value="12:00:00" aria-label="実行時刻">
   <div class="spin"><span>時</span><button class="flat mini" aria-label="時を増やす"><svg width="10" height="5"><path d="M0 5h10L5 0z"/></svg></button><button class="flat mini" aria-label="時を減らす"><svg width="10" height="5"><path d="M0 0h10L5 5z"/></svg></button></div>
   <div class="spin"><span>分</span><button class="flat mini" aria-label="分を増やす"><svg width="10" height="5"><path d="M0 5h10L5 0z"/></svg></button><button class="flat mini" aria-label="分を減らす"><svg width="10" height="5"><path d="M0 0h10L5 5z"/></svg></button></div>
   <div class="spin"><span>秒</span><button class="flat mini" aria-label="秒を増やす"><svg width="10" height="5"><path d="M0 5h10L5 0z"/></svg></button><button class="flat mini" aria-label="秒を減らす"><svg width="10" height="5"><path d="M0 0h10L5 5z"/></svg></button></div>
  </div>
  <div class="split text-center text-nowrap"><span>-------------</span>自動取得の設定<span>-------------</span></div>
  <div class="note">実行時刻から一定時間ごとにデータを取得します</div>
  <div class="cbx sunk d-flex align-items-start"><input value="設定しない" aria-label="自動取得の間隔"><button class="flat mini" aria-label="一覧を開く"></button></div>
  <select class="drop" size="6" aria-label="間隔の候補"><option selected>設定しない</option><option>5分毎</option><option>10分毎</option><option>30分毎</option><option>60分毎</option><option>120分毎</option></select>
  <div class="note later">と実行予約はキャンセルされます</div>
  <div class="actions d-flex justify-content-between"><button class="act">決定</button><button class="act">キャンセル</button></div>
  <svg class="pointer" width="22" height="30"><path d="M0 0l20 15-7 2 5 9-5 3-4-9-5 5z" fill="#000"/></svg>
 </div>
</div>

<div class="strip flex-grow-1">設定ボタンを押すと実行時刻の<br>指定や自動取得の設定ができます</div>
</body>
</html>
